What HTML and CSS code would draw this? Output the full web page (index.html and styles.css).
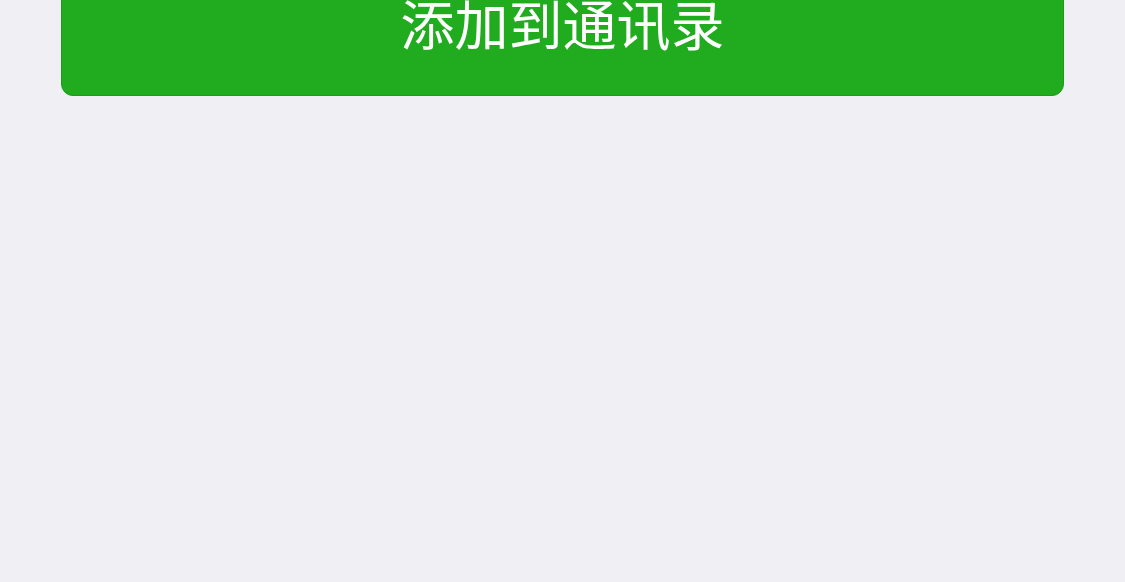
FILE: index.html
```html
<!DOCTYPE html>
<html lang="zh-CN">
  <head>
    <meta charset="UTF-8" />
    <meta name="viewport" content="width=device-width, initial-scale=1.0" />
    <title>添加到通讯录</title>
    <link rel="stylesheet" href="styles.css">
  </head>
  <body>
    <div class="page">
      <!-- Primary action -->
      <div class="actions">
        <button class="btn-primary" type="button">添加到通讯录</button>
      </div>
    </div>
  </body>
</html>
```

FILE: styles.css
```css
body {
  margin: 0;
  padding: 0;
  background: #efeff4;
  font-family: "Noto Sans CJK SC", "Noto Sans", sans-serif;
}

.page {
  width: 100vw;
  height: 100vh;
  overflow: hidden;
}

.actions {
  padding: 0 61px;
  margin-top: -56px;
}

.btn-primary {
  display: block;
  width: 100%;
  height: 152px;
  margin: 0;
  padding: 6px 0 0;
  background: #20ac1e;
  border: 1px solid #1b9b19;
  border-radius: 12px;
  color: #fff;
  font-family: inherit;
  font-size: 54px;
  line-height: 144px;
  text-align: center;
}
```
